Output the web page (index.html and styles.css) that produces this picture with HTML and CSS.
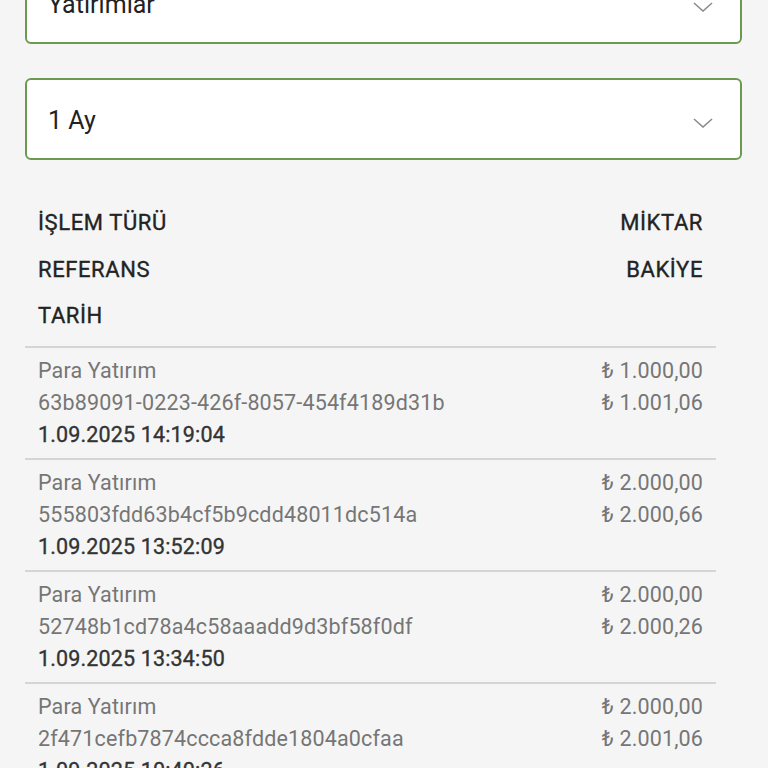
FILE: index.html
```html
<!DOCTYPE html>
<html lang="tr">
<head>
<meta charset="utf-8">
<title>Yatırımlar</title>
<link rel="stylesheet" href="styles.css">
</head>
<body>
<div class="page">
  <div class="select">
    <span class="select-value">Yatırımlar</span>
    <svg class="chevron" width="20" height="10" viewBox="0 0 20 10"><polyline points="1,1 10,9 19,1" fill="none" stroke="#8c8c8c" stroke-width="1.6"/></svg>
  </div>
  <div class="select">
    <span class="select-value">1 Ay</span>
    <svg class="chevron" width="20" height="10" viewBox="0 0 20 10"><polyline points="1,1 10,9 19,1" fill="none" stroke="#8c8c8c" stroke-width="1.6"/></svg>
  </div>

  <div class="table">
    <div class="head">
      <div class="col-left">
        <div>İŞLEM TÜRÜ</div>
        <div>REFERANS</div>
        <div>TARİH</div>
      </div>
      <div class="col-right">
        <div>MİKTAR</div>
        <div>BAKİYE</div>
      </div>
    </div>

    <div class="row">
      <div class="col-left">
        <div>Para Yatırım</div>
        <div>63b89091-0223-426f-8057-454f4189d31b</div>
        <div class="date">1.09.2025 14:19:04</div>
      </div>
      <div class="col-right">
        <div>₺ 1.000,00</div>
        <div>₺ 1.001,06</div>
      </div>
    </div>

    <div class="row">
      <div class="col-left">
        <div>Para Yatırım</div>
        <div>555803fdd63b4cf5b9cdd48011dc514a</div>
        <div class="date">1.09.2025 13:52:09</div>
      </div>
      <div class="col-right">
        <div>₺ 2.000,00</div>
        <div>₺ 2.000,66</div>
      </div>
    </div>

    <div class="row">
      <div class="col-left">
        <div>Para Yatırım</div>
        <div>52748b1cd78a4c58aaadd9d3bf58f0df</div>
        <div class="date">1.09.2025 13:34:50</div>
      </div>
      <div class="col-right">
        <div>₺ 2.000,00</div>
        <div>₺ 2.000,26</div>
      </div>
    </div>

    <div class="row">
      <div class="col-left">
        <div>Para Yatırım</div>
        <div>2f471cefb7874ccca8fdde1804a0cfaa</div>
        <div class="date">1.09.2025 10:40:26</div>
      </div>
      <div class="col-right">
        <div>₺ 2.000,00</div>
        <div>₺ 2.001,06</div>
      </div>
    </div>
  </div>
</div>
</body>
</html>
```

FILE: styles.css
```css
html, body {
  margin: 0;
  padding: 0;
  background: #f5f5f5;
}

body {
  font-family: Roboto, "Noto Sans", "DejaVu Sans", sans-serif;
  color: #222;
}

.page {
  margin-top: -38px;
  padding: 0 26px 0 25px;
  display: flex;
  flex-direction: column;
  gap: 34px;
}

.select {
  box-sizing: border-box;
  height: 82px;
  background: #fff;
  border: 2px solid #6b9a4e;
  border-radius: 6px;
  padding: 2px 27px 0 21px;
  display: flex;
  align-items: center;
  justify-content: space-between;
}

.select-value {
  font-size: 25px;
  color: #222;
}

.chevron {
  display: block;
  margin-top: 5px;
}

.table {
  margin-top: 6px;
  width: 691px;
  display: flex;
  flex-direction: column;
}

.head {
  display: flex;
  justify-content: space-between;
  padding: 0 13px 6px 13px;
  font-size: 22px;
  font-weight: 400;
  letter-spacing: 0.6px;
  -webkit-text-stroke: 0.35px currentColor;
  line-height: 46.5px;
  color: #232323;
}

.row {
  display: flex;
  justify-content: space-between;
  border-top: 2px solid #d5d5d5;
  padding: 7px 13px;
  font-size: 21.5px;
  letter-spacing: 0.15px;
  line-height: 32px;
  color: #767676;
}

.col-right {
  text-align: right;
}

.date {
  color: #333;
  font-weight: 400;
  -webkit-text-stroke: 0.35px currentColor;
}
```
